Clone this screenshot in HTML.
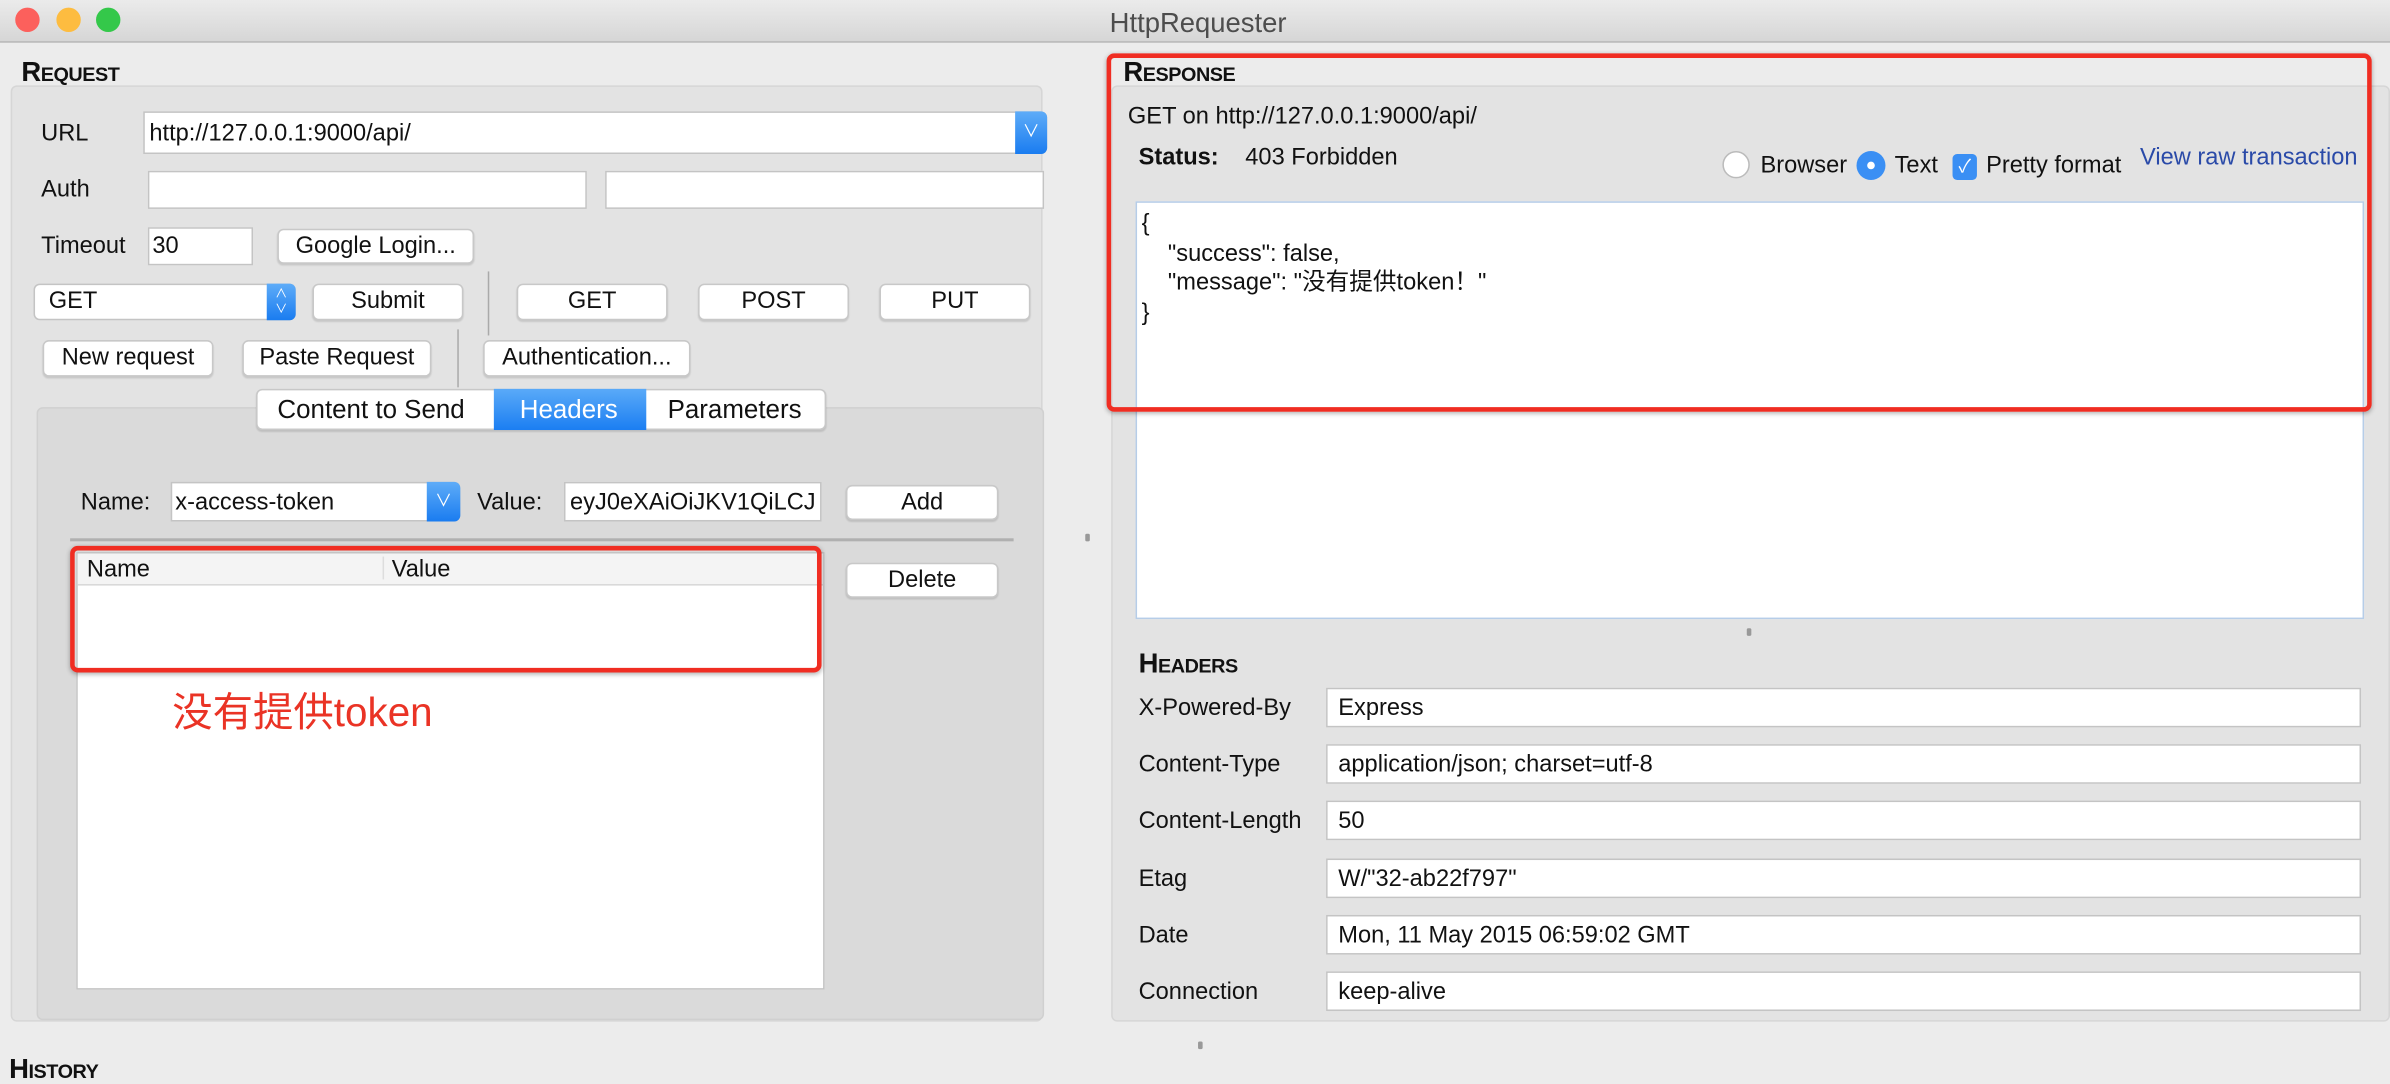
<!DOCTYPE html>
<html><head><meta charset="utf-8">
<style>
html,body{margin:0;padding:0;width:2390px;height:1072px;overflow:hidden;background:#ececec}
#w{position:absolute;left:0;top:0;width:1568px;height:703px;transform:scale(1.52423,1.5249);transform-origin:0 0;font-family:"Liberation Sans","Noto Sans CJK SC",sans-serif;font-size:15.5px;color:#111;background:#ececec}
.a{position:absolute}
.t{position:absolute;white-space:nowrap;line-height:17px}
.box{position:absolute;background:#fff;border:1px solid #c4c4c4;box-sizing:border-box}
.btn{position:absolute;background:#fff;border:1px solid #c8c8c8;border-radius:4px;box-sizing:border-box;text-align:center;box-shadow:0 1px 1px rgba(0,0,0,.12);line-height:21px;white-space:nowrap}
.h{font-weight:bold;font-variant:small-caps;font-size:18px;letter-spacing:-.3px}
.blue{position:absolute;background:linear-gradient(#5eacf8,#1a7cf0);border-radius:0 4px 4px 0;color:#fff;text-align:center}
.red{position:absolute;border:3px solid #f02d22;border-radius:5px;box-sizing:border-box;box-shadow:0 1px 3px rgba(0,0,0,.3)}
.dot{position:absolute;width:3px;height:5px;background:#999;border-radius:1px}
</style></head><body><div id="w">
<div class="a" style="left:0;top:0;width:1568px;height:27px;background:linear-gradient(#ebebeb,#d6d6d6);border-bottom:1px solid #b5b5b5"></div>
<div class="a" style="left:10px;top:5px;width:16px;height:16px;border-radius:50%;background:#fc605c"></div>
<div class="a" style="left:37px;top:5px;width:16px;height:16px;border-radius:50%;background:#fdbc40"></div>
<div class="a" style="left:63px;top:5px;width:16px;height:16px;border-radius:50%;background:#34c84a"></div>
<div class="t" style="left:728px;top:5px;font-size:18px;line-height:20px;color:#4d4d4d">HttpRequester</div>

<div class="t h" style="left:14px;top:37px;line-height:20px">Request</div>
<div class="a" style="left:7px;top:56px;width:677px;height:614px;background:#e3e3e3;border:1px solid #d6d6d6;border-radius:4px;box-sizing:border-box"></div>
<div class="t" style="left:27px;top:79px">URL</div>
<div class="box" style="left:94px;top:73px;width:593px;height:28px;border-radius:0 4px 4px 0"></div>
<div class="t" style="left:98px;top:79px">http://127.0.0.1:9000/api/</div>
<div class="blue" style="left:666px;top:73px;width:21px;height:28px;line-height:28px;font-size:11px">&#x2228;</div>
<div class="t" style="left:27px;top:116px">Auth</div>
<div class="box" style="left:97px;top:112px;width:288px;height:25px"></div>
<div class="box" style="left:397px;top:112px;width:288px;height:25px"></div>
<div class="t" style="left:27px;top:153px">Timeout</div>
<div class="box" style="left:97px;top:149px;width:69px;height:25px"></div>
<div class="t" style="left:100px;top:153px">30</div>
<div class="btn" style="left:182px;top:150px;width:129px;height:23px">Google Login...</div>
<div class="box" style="left:22px;top:186px;width:172px;height:24px;border-radius:4px"></div>
<div class="t" style="left:32px;top:189px">GET</div>
<div class="blue" style="left:175px;top:186px;width:19px;height:24px;font-size:8px;line-height:10px;padding-top:2px;box-sizing:border-box">&#x2227;<br>&#x2228;</div>
<div class="btn" style="left:205px;top:186px;width:99px;height:24px">Submit</div>
<div class="a" style="left:320px;top:178px;width:1px;height:42px;background:#aaa"></div>
<div class="a" style="left:300px;top:216px;width:1px;height:38px;background:#aaa"></div>
<div class="btn" style="left:339px;top:186px;width:99px;height:24px">GET</div>
<div class="btn" style="left:458px;top:186px;width:99px;height:24px">POST</div>
<div class="btn" style="left:577px;top:186px;width:99px;height:24px">PUT</div>
<div class="btn" style="left:28px;top:223px;width:112px;height:24px">New request</div>
<div class="btn" style="left:159px;top:223px;width:124px;height:24px">Paste Request</div>
<div class="btn" style="left:317px;top:223px;width:136px;height:24px">Authentication...</div>

<div class="a" style="left:24px;top:267px;width:661px;height:402px;background:#dadada;border:1px solid #d0d0d0;border-radius:4px;box-sizing:border-box"></div>
<div class="btn" style="left:168px;top:255px;width:374px;height:27px;border-radius:4px"></div>
<div class="t" style="left:182px;top:259px;font-size:17px;line-height:19px">Content to Send</div>
<div class="a" style="left:324px;top:255px;width:100px;height:27px;background:linear-gradient(#5aaaf8,#1b7ef2)"></div>
<div class="t" style="left:341px;top:259px;font-size:17px;line-height:19px;color:#fff">Headers</div>
<div class="t" style="left:438px;top:259px;font-size:17px;line-height:19px">Parameters</div>

<div class="t" style="left:53px;top:321px">Name:</div>
<div class="box" style="left:112px;top:316px;width:190px;height:26px;border-radius:0 4px 4px 0"></div>
<div class="t" style="left:115px;top:321px">x-access-token</div>
<div class="blue" style="left:280px;top:316px;width:22px;height:26px;line-height:26px;font-size:11px">&#x2228;</div>
<div class="t" style="left:313px;top:321px">Value:</div>
<div class="box" style="left:370px;top:316px;width:169px;height:26px"></div>
<div class="t" style="left:374px;top:321px;width:162px;overflow:hidden">eyJ0eXAiOiJKV1QiLCJhbGciOi</div>
<div class="btn" style="left:555px;top:318px;width:100px;height:23px">Add</div>
<div class="a" style="left:46px;top:353px;width:619px;height:2px;background:#b0b0b0"></div>

<div class="box" style="left:50px;top:362px;width:491px;height:287px"></div>
<div class="a" style="left:51px;top:363px;width:489px;height:20px;background:#f4f4f4;border-bottom:1px solid #d8d8d8"></div>
<div class="a" style="left:251px;top:365px;width:1px;height:15px;background:#ddd"></div>
<div class="t" style="left:57px;top:365px">Name</div>
<div class="t" style="left:257px;top:365px">Value</div>
<div class="btn" style="left:555px;top:369px;width:100px;height:23px">Delete</div>
<div class="red" style="left:46px;top:358px;width:493px;height:83px"></div>
<div class="t" style="left:113px;top:452px;font-size:26.5px;line-height:30px;color:#ea3325">没有提供token</div>

<div class="dot" style="left:712px;top:350px"></div>

<div class="t h" style="left:737px;top:37px;line-height:20px">Response</div>
<div class="a" style="left:729px;top:56px;width:839px;height:614px;background:#e3e3e3;border:1px solid #d6d6d6;border-radius:4px;box-sizing:border-box"></div>
<div class="t" style="left:740px;top:68px">GET on http://127.0.0.1:9000/api/</div>
<div class="t" style="left:747px;top:95px;font-weight:bold">Status:</div>
<div class="t" style="left:817px;top:95px">403 Forbidden</div>
<div class="a" style="left:1130px;top:99px;width:18px;height:18px;border-radius:50%;background:#fff;border:1px solid #bbb;box-sizing:border-box"></div>
<div class="t" style="left:1155px;top:100px">Browser</div>
<div class="a" style="left:1218px;top:99px;width:19px;height:19px;border-radius:50%;background:#3a8ff4"></div>
<div class="a" style="left:1225px;top:106px;width:5px;height:5px;border-radius:50%;background:#fff"></div>
<div class="t" style="left:1243px;top:100px">Text</div>
<div class="a" style="left:1281px;top:101px;width:16px;height:17px;border-radius:3px;background:#3a8ff4;color:#fff;font-size:12px;line-height:17px;text-align:center">&#x2713;</div>
<div class="t" style="left:1303px;top:100px">Pretty format</div>
<div class="t" style="left:1404px;top:95px;color:#2a4aa8">View raw transaction</div>
<div class="a" style="left:745px;top:132px;width:806px;height:274px;background:#fff;border:1px solid #b6cde8;box-sizing:border-box"></div>
<div class="t" style="left:749px;top:137px;line-height:19.5px">{<br>&nbsp;&nbsp;&nbsp;&nbsp;"success": false,<br>&nbsp;&nbsp;&nbsp;&nbsp;"message": "没有提供token！"<br>}</div>
<div class="red" style="left:726px;top:35px;width:830px;height:235px"></div>
<div class="dot" style="left:1146px;top:412px"></div>

<div class="t h" style="left:747px;top:425px;line-height:20px">Headers</div>
<div class="t" style="left:747px;top:456px">X-Powered-By</div>
<div class="box" style="left:870px;top:451px;width:679px;height:26px"></div>
<div class="t" style="left:878px;top:456px">Express</div>
<div class="t" style="left:747px;top:493px">Content-Type</div>
<div class="box" style="left:870px;top:488px;width:679px;height:26px"></div>
<div class="t" style="left:878px;top:493px">application/json; charset=utf-8</div>
<div class="t" style="left:747px;top:530px">Content-Length</div>
<div class="box" style="left:870px;top:525px;width:679px;height:26px"></div>
<div class="t" style="left:878px;top:530px">50</div>
<div class="t" style="left:747px;top:568px">Etag</div>
<div class="box" style="left:870px;top:563px;width:679px;height:26px"></div>
<div class="t" style="left:878px;top:568px">W/"32-ab22f797"</div>
<div class="t" style="left:747px;top:605px">Date</div>
<div class="box" style="left:870px;top:600px;width:679px;height:26px"></div>
<div class="t" style="left:878px;top:605px">Mon, 11 May 2015 06:59:02 GMT</div>
<div class="t" style="left:747px;top:642px">Connection</div>
<div class="box" style="left:870px;top:637px;width:679px;height:26px"></div>
<div class="t" style="left:878px;top:642px">keep-alive</div>

<div class="dot" style="left:786px;top:683px"></div>
<div class="t h" style="left:6px;top:691px;line-height:20px">History</div>
</div></body></html>
